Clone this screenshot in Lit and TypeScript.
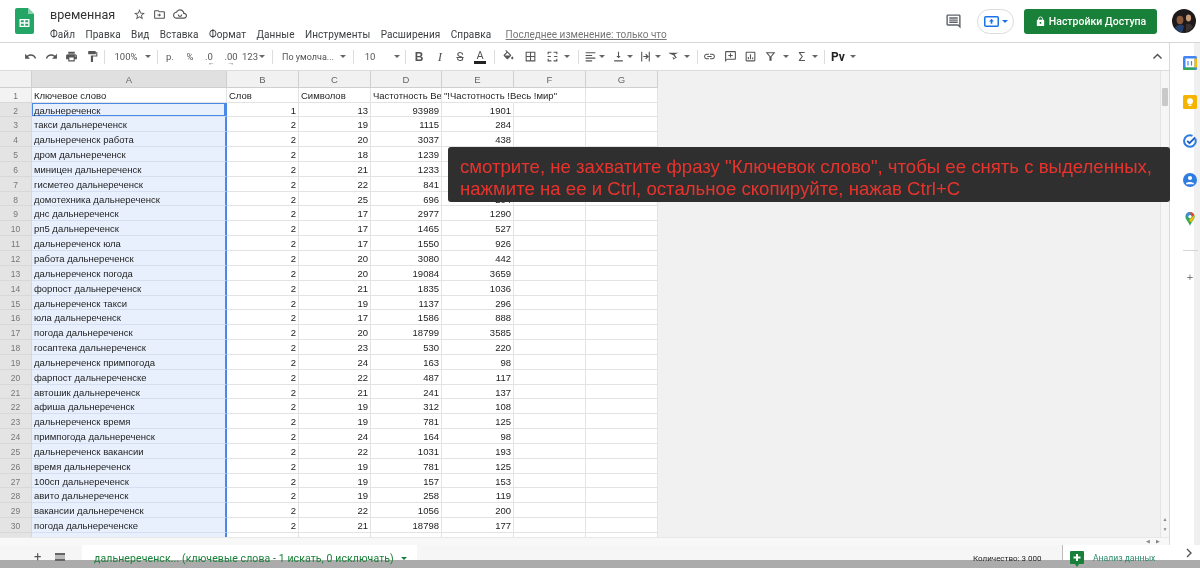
import {css, html, LitElement, svg} from 'lit';
import type {TemplateResult} from 'lit';
import {customElement} from 'lit/decorators.js';

type Row = [string, number, number, number, number];

const ROWS: Row[] = [
  ['дальнереченск', 1, 13, 93989, 1901],
  ['такси дальнереченск', 2, 19, 1115, 284],
  ['дальнереченск работа', 2, 20, 3037, 438],
  ['дром дальнереченск', 2, 18, 1239, 851],
  ['миницен дальнереченск', 2, 21, 1233, 506],
  ['гисметео дальнереченск', 2, 22, 841, 340],
  ['домотехника дальнереченск', 2, 25, 696, 204],
  ['днс дальнереченск', 2, 17, 2977, 1290],
  ['рп5 дальнереченск', 2, 17, 1465, 527],
  ['дальнереченск юла', 2, 17, 1550, 926],
  ['работа дальнереченск', 2, 20, 3080, 442],
  ['дальнереченск погода', 2, 20, 19084, 3659],
  ['форпост дальнереченск', 2, 21, 1835, 1036],
  ['дальнереченск такси', 2, 19, 1137, 296],
  ['юла дальнереченск', 2, 17, 1586, 888],
  ['погода дальнереченск', 2, 20, 18799, 3585],
  ['госаптека дальнереченск', 2, 23, 530, 220],
  ['дальнереченск примпогода', 2, 24, 163, 98],
  ['фарпост дальнереченске', 2, 22, 487, 117],
  ['автошик дальнереченск', 2, 21, 241, 137],
  ['афиша дальнереченск', 2, 19, 312, 108],
  ['дальнереченск время', 2, 19, 781, 125],
  ['примпогода дальнереченск', 2, 24, 164, 98],
  ['дальнереченск вакансии', 2, 22, 1031, 193],
  ['время дальнереченск', 2, 19, 781, 125],
  ['100сп дальнереченск', 2, 19, 157, 153],
  ['авито дальнереченск', 2, 19, 258, 119],
  ['вакансии дальнереченск', 2, 22, 1056, 200],
  ['погода дальнереченске', 2, 21, 18798, 177],
];

const COLS = ['A', 'B', 'C', 'D', 'E', 'F', 'G'];
const MENU = ['Файл', 'Правка', 'Вид', 'Вставка', 'Формат', 'Данные', 'Инструменты', 'Расширения', 'Справка'];

const icon = (d: string, size = 13, fill = '#555') =>
  html`<svg width=${size} height=${size} viewBox="0 0 24 24" fill=${fill}>${svg`<path d=${d}></path>`}</svg>`;

const UNDO = 'M12.5 8c-2.65 0-5.05.99-6.9 2.6L2 7v9h9l-3.62-3.62c1.39-1.16 3.16-1.88 5.12-1.88 3.54 0 6.55 2.31 7.6 5.5l2.37-.78C21.08 11.03 17.15 8 12.5 8z';
const REDO = 'M18.4 10.6C16.55 8.99 14.15 8 11.5 8c-4.65 0-8.58 3.03-9.96 7.22L3.9 16c1.05-3.19 4.05-5.5 7.6-5.5 1.95 0 3.73.72 5.12 1.88L13 16h9V7l-3.6 3.6z';
const PRINT = 'M19 8H5c-1.66 0-3 1.34-3 3v6h4v4h12v-4h4v-6c0-1.66-1.34-3-3-3zm-3 11H8v-5h8v5zm3-7c-.55 0-1-.45-1-1s.45-1 1-1 1 .45 1 1-.45 1-1 1zm-1-9H6v4h12V3z';
const PAINT = 'M18 4V3c0-.55-.45-1-1-1H5c-.55 0-1 .45-1 1v4c0 .55.45 1 1 1h12c.55 0 1-.45 1-1V6h1v4H9v11c0 .55.45 1 1 1h2c.55 0 1-.45 1-1v-9h8V4h-3z';
const FILL = 'M16.56 8.94L7.62 0 6.21 1.41l2.38 2.38-5.15 5.15c-.59.59-.59 1.54 0 2.12l5.5 5.5c.29.29.68.44 1.06.44s.77-.15 1.06-.44l5.5-5.5c.59-.58.59-1.53 0-2.12zM5.21 10L10 5.21 14.79 10H5.21zM19 11.5s-2 2.17-2 3.5c0 1.1.9 2 2 2s2-.9 2-2c0-1.33-2-3.5-2-3.5z';
const BORDERS = 'M3 3v18h18V3H3zm8 16H5v-6h6v6zm0-8H5V5h6v6zm8 8h-6v-6h6v6zm0-8h-6V5h6v6z';
const MERGE = 'M3 3h7v2H5v3H3V3zm11 0h7v5h-2V5h-5V3zM3 16h2v3h5v2H3v-5zm16 0h2v5h-7v-2h5v-3zM3 11h6v2H3zm12 0h6v2h-6z';
const HALIGN = 'M3 4h18v2H3zM3 9h12v2H3zM3 14h18v2H3zM3 19h12v2H3z';
const VALIGN = 'M16 11h-3V3h-2v8H8l4 4 4-4zM4 19v2h16v-2H4z';
const WRAP = 'M4 3h2v18H4zM18 3h2v18h-2zM8 11h6l-2.5-2.5L13 7l5 5-5 5-1.5-1.5L14 13H8z';
const ROTATE = 'M3 5h18l-7 3.5 4 6-1.8 1-4.2-6L5 7zM10 13l2 5 3-3z';
const LINK = 'M3.9 12c0-1.71 1.39-3.1 3.1-3.1h4V7H7c-2.76 0-5 2.24-5 5s2.24 5 5 5h4v-1.9H7c-1.71 0-3.1-1.39-3.1-3.1zM8 13h8v-2H8v2zm9-6h-4v1.9h4c1.71 0 3.1 1.39 3.1 3.1s-1.39 3.1-3.1 3.1h-4V17h4c2.76 0 5-2.24 5-5s-2.24-5-5-5z';
const NOTE = 'M20 2H4c-1.1 0-2 .9-2 2v18l4-4h14c1.1 0 2-.9 2-2V4c0-1.1-.9-2-2-2zm0 14H6l-2 2V4h16v12zM11 6h2v3h3v2h-3v3h-2v-3H8V9h3z';
const CHART = 'M19 3H5c-1.1 0-2 .9-2 2v14c0 1.1.9 2 2 2h14c1.1 0 2-.9 2-2V5c0-1.1-.9-2-2-2zm0 16H5V5h14v14zM7 13h2v4H7zm4-5h2v9h-2zm4 6h2v3h-2z';
const FILTER = 'M3 4h18l-7 8.5V20h-4v-7.5zM7.2 6l4.8 5.800 4.800-5.800z';
const STAR = 'M22 9.24l-7.19-.62L12 2 9.19 8.63 2 9.24l5.46 4.73L5.82 21 12 17.27 18.18 21l-1.63-7.03L22 9.24zM12 15.4l-3.76 2.27 1-4.28-3.32-2.88 4.38-.38L12 6.1l1.71 4.04 4.38.38-3.32 2.88 1 4.28L12 15.4z';
const FOLDER = 'M20 6h-8l-2-2H4c-1.1 0-2 .9-2 2v12c0 1.1.9 2 2 2h16c1.1 0 2-.9 2-2V8c0-1.1-.9-2-2-2zm0 12H4V6h5.2l2 2H20v10zM11 10v2H8v2h3v2l4-3z';
const CLOUD = 'M19.35 10.04C18.67 6.59 15.64 4 12 4 9.11 4 6.6 5.64 5.35 8.04 2.34 8.36 0 10.91 0 14c0 3.31 2.69 6 6 6h13c2.76 0 5-2.24 5-5 0-2.64-2.05-4.78-4.65-4.96zM19 18H6c-2.21 0-4-1.79-4-4 0-2.05 1.53-3.76 3.56-3.97l1.07-.11.5-.95C8.08 7.14 9.94 6 12 6c2.62 0 4.88 1.86 5.39 4.43l.3 1.5 1.53.11c1.56.1 2.78 1.41 2.78 2.96 0 1.65-1.35 3-3 3zM8 13a4 4 0 0 0 8 0h-2a2 2 0 0 1-4 0z';
const COMMENT = 'M22 4c0-1.1-.9-2-2-2H4c-1.1 0-2 .9-2 2v12c0 1.1.9 2 2 2h14l4 4V4zm-2 13.2L18.8 16H4V4h16v13.2zM6 12h12v2H6zm0-3h12v2H6zm0-3h12v2H6z';
const LOCK = 'M18 8h-1V6c0-2.76-2.24-5-5-5S7 3.24 7 6v2H6c-1.1 0-2 .9-2 2v10c0 1.1.9 2 2 2h12c1.1 0 2-.9 2-2V10c0-1.1-.9-2-2-2zm-6 9c-1.1 0-2-.9-2-2s.9-2 2-2 2 .9 2 2-.9 2-2 2zm3.1-9H8.9V6c0-1.71 1.39-3.1 3.1-3.1 1.71 0 3.1 1.39 3.1 3.1v2z';

const caret = html`<span class="caret"></span>`;
const txt = (s: string, cls = '') => html`<span class="tt ${cls}">${s}</span>`;

// [centre x of the item, its width, content]
const TOOLS: [number, number, TemplateResult | null][] = [
  [30, 16, icon(UNDO)],
  [51, 16, icon(REDO)],
  [71, 16, icon(PRINT)],
  [92, 16, icon(PAINT)],
  [104, 1, null],
  [126, 24, txt('100%')],
  [148, 8, caret],
  [157, 1, null],
  [170, 14, txt('р.')],
  [190, 14, txt('%')],
  [209, 16, html`<span class="tt dec">.0<i>←</i></span>`],
  [231, 18, html`<span class="tt dec">.00<i>→</i></span>`],
  [250, 18, txt('123')],
  [262, 8, caret],
  [272, 1, null],
  [308, 52, txt('По умолча...', 'narrow')],
  [343, 8, caret],
  [353, 1, null],
  [370, 14, txt('10')],
  [397, 8, caret],
  [405, 1, null],
  [419, 14, txt('B', 'b')],
  [440, 14, txt('I', 'i')],
  [460, 14, txt('S', 's')],
  [480, 16, html`<span class="tt a">A</span>`],
  [494, 1, null],
  [508, 15, icon(FILL)],
  [530, 15, icon(BORDERS)],
  [552, 15, icon(MERGE)],
  [567, 8, caret],
  [578, 1, null],
  [590, 15, icon(HALIGN)],
  [602, 8, caret],
  [618, 15, icon(VALIGN)],
  [630, 8, caret],
  [645, 15, icon(WRAP)],
  [658, 8, caret],
  [673, 15, icon(ROTATE)],
  [687, 8, caret],
  [697, 1, null],
  [709, 15, icon(LINK)],
  [730, 15, icon(NOTE)],
  [750, 15, icon(CHART)],
  [770, 15, icon(FILTER)],
  [786, 8, caret],
  [802, 12, txt('Σ', 'sum')],
  [815, 8, caret],
  [824, 1, null],
  [838, 18, txt('Pv', 'pv')],
  [853, 8, caret],
];

@customElement('app-root')
export class AppRoot extends LitElement {
  static styles = css`
    :host {
      display: block;
      width: 1200px;
      height: 568px;
      overflow: hidden;
      font-family: 'Liberation Sans', Arial, sans-serif;
      color: #222;
    }
    .app {
      position: relative;
      display: flex;
      flex-direction: column;
      width: 1200px;
      height: 568px;
      background: #fff;
      overflow: hidden;
      filter: blur(0.35px);
    }

    /* header */
    .head {
      flex: none;
      height: 43px;
      box-sizing: border-box;
      border-bottom: 1px solid #d6d6d6;
      display: flex;
      align-items: flex-start;
      padding-left: 15px;
    }
    .logo {
      margin-top: 8px;
      width: 19px;
      height: 26px;
    }
    .titles {
      margin-left: 16px;
      display: flex;
      flex-direction: column;
    }
    .title-row {
      display: flex;
      align-items: center;
      height: 20px;
      margin-top: 4px;
    }
    .title {
      font-family: Roboto, sans-serif;
      font-size: 12.6px;
      color: #333;
      width: 83px;
    }
    .title-row svg {
      margin-right: 7px;
    }
    .menu {
      display: flex;
      align-items: center;
      height: 17px;
      margin-top: 2px;
      font-family: Roboto, sans-serif;
      font-size: 10px;
      letter-spacing: 0.1px;
      color: #3c4043;
      gap: 10.3px;
    }
    .last {
      margin-left: 4px;
      letter-spacing: 0;
      color: #777;
      text-decoration: underline;
    }
    .head-right {
      margin-left: auto;
      display: flex;
      align-items: center;
      height: 42px;
      padding-right: 4px;
    }
    .present {
      margin-left: 15px;
      width: 37px;
      height: 25px;
      box-sizing: border-box;
      border: 1px solid #dadce0;
      border-radius: 13px;
      display: flex;
      align-items: center;
      justify-content: center;
      gap: 3px;
    }
    .present .caret {
      border-top-color: #1a73e8;
    }
    .share {
      margin-left: 10px;
      width: 133px;
      height: 25px;
      border-radius: 3px;
      background: #188038;
      color: #fff;
      font-family: Roboto, sans-serif;
      font-weight: 500;
      font-size: 10.5px;
      display: flex;
      align-items: center;
      justify-content: center;
      gap: 3px;
    }
    .avatar {
      margin-left: 15px;
      width: 24px;
      height: 24px;
    }

    /* toolbar */
    .mid {
      flex: none;
      height: 502px;
      display: flex;
    }
    .work {
      flex: 1;
      min-width: 0;
      display: flex;
      flex-direction: column;
      border-right: 1px solid #d9d9d9;
    }
    .toolbar {
      flex: none;
      height: 28px;
      box-sizing: border-box;
      border-bottom: 1px solid #dcdcdc;
      display: flex;
      align-items: center;
    }
    .tool {
      flex: none;
      display: flex;
      align-items: center;
      justify-content: center;
      white-space: nowrap;
    }
    .sep {
      height: 14px;
      background: #dadce0;
    }
    .caret {
      width: 0;
      height: 0;
      border-left: 3px solid transparent;
      border-right: 3px solid transparent;
      border-top: 3px solid #666;
    }
    .tt {
      font-family: Roboto, sans-serif;
      font-size: 9.5px;
      color: #555;
      position: relative;
    }
    .narrow {
      font-size: 9px;
    }
    .b {
      font-weight: 700;
      font-size: 12px;
      font-family: 'Liberation Sans', sans-serif;
    }
    .i {
      font-style: italic;
      font-size: 13px;
      font-family: 'Liberation Serif', serif;
    }
    .s {
      font-size: 12px;
      text-decoration: line-through;
    }
    .a {
      font-size: 11px;
      line-height: 11px;
      border-bottom: 3px solid #222;
      padding: 0 2px;
    }
    .sum {
      font-size: 12px;
    }
    .pv {
      font-weight: 700;
      font-size: 12px;
      color: #222;
    }
    .dec i {
      position: absolute;
      left: 3px;
      top: 8px;
      font-style: normal;
      font-size: 7px;
    }
    .collapse {
      margin-left: auto;
      margin-right: 6px;
    }

    /* grid */
    .area {
      flex: 1;
      min-height: 0;
      display: flex;
      background: #f1f1f1;
    }
    .sheet {
      flex: 1;
      min-width: 0;
      overflow: hidden;
    }
    .grid {
      display: grid;
      grid-template-columns: 32px 195px 72px 72px 71px 72px 72px 72px;
      grid-template-rows: 16.7px;
      grid-auto-rows: 14.857px;
      width: 658px;
      font-size: 9.5px;
      color: #1d1d1d;
      background: #fff;
    }
    .grid > div {
      box-sizing: border-box;
      border-right: 1px solid #e3e3e3;
      border-bottom: 1px solid #e3e3e3;
      overflow: hidden;
      white-space: nowrap;
      line-height: 14px;
      padding: 1px 2px 0;
    }
    .grid > .ch {
      background: #f1f1f1;
      border-color: #cfcfcf;
      text-align: center;
      color: #666;
      line-height: 16px;
    }
    .grid > .ch.on {
      background: #e0e0e0;
    }
    .grid > .rh {
      background: #f3f3f3;
      border-color: #d8d8d8;
      text-align: center;
      color: #777;
      font-size: 8.5px;
    }
    .grid > .rh.on {
      background: #e4e4e4;
    }
    .grid > .num {
      text-align: right;
    }
    .grid > .sel {
      background: #e8f0fd;
      border-right: 2px solid #4a89e8;
      border-bottom-color: #d5dff0;
    }
    .grid > .cur {
      box-shadow: inset 0 0 0 1px #4a89e8;
    }
    .grid > .spill {
      overflow: visible;
      border-right-color: transparent;
    }
    .vs {
      flex: none;
      width: 8px;
      background: #f6f6f6;
      border-left: 1px solid #e4e4e4;
      display: flex;
      flex-direction: column;
      align-items: center;
      padding: 17px 0 3px;
    }
    .vs i {
      width: 6px;
      height: 18px;
      background: #c9c9c9;
      border-radius: 1px;
    }
    .vs em {
      font-style: normal;
      font-size: 5px;
      line-height: 10px;
      color: #888;
      text-align: center;
    }
    .vs em:first-of-type {
      margin-top: auto;
    }
    .hs {
      flex: none;
      height: 8px;
      background: #f8f8f8;
      border-top: 1px solid #e8e8e8;
      box-sizing: border-box;
      display: flex;
      justify-content: flex-end;
      gap: 6px;
      padding-right: 9px;
      font-size: 5px;
      line-height: 7px;
      color: #888;
    }

    /* right icon rail */
    .side {
      flex: none;
      width: 30px;
      box-sizing: border-box;
      padding: 13px 0 0 10px;
      display: flex;
      flex-direction: column;
      align-items: center;
      background: linear-gradient(to right, #fff 24px, #f0f0f0 24px);
      gap: 25px;
    }
    .side svg {
      display: block;
      flex: none;
    }
    .rule {
      width: 15px;
      height: 1px;
      background: #d5d5d5;
      margin-top: -1px;
    }
    .plus {
      margin-top: -5px;
      color: #777;
      font-size: 11px;
      line-height: 12px;
    }

    /* sheet bar */
    .bar {
      position: relative;
      flex: none;
      height: 23px;
      background: #f6f6f6;
      display: flex;
      align-items: flex-start;
      font-family: Roboto, sans-serif;
    }
    .band {
      position: absolute;
      left: 0;
      right: 0;
      top: 15px;
      bottom: 0;
      background: #ababab;
    }
    .bar-btns {
      position: relative;
      width: 82px;
      display: flex;
      gap: 14px;
      padding: 5px 0 0 34px;
      box-sizing: border-box;
      color: #555;
      font-size: 13px;
      line-height: 13px;
    }
    .list {
      width: 10px;
      height: 8px;
      margin-top: 3px;
      border-top: 2px solid #666;
      border-bottom: 2px solid #666;
      box-sizing: border-box;
      background: #bbb;
    }
    .tab {
      width: 335px;
      height: 15px;
      background: #fff;
      box-sizing: border-box;
      padding: 7px 0 0 12px;
      display: flex;
      gap: 7px;
      color: #188038;
      font-size: 10.5px;
      letter-spacing: 0.1px;
      line-height: 13px;
      white-space: nowrap;
      position: relative;
    }
    .tab .caret {
      border-top-color: #188038;
      margin-top: 5px;
    }
    .count {
      position: absolute;
      left: 973px;
      top: 7px;
      font-size: 8px;
      line-height: 13px;
      color: #222;
    }
    .explore {
      position: absolute;
      left: 1062px;
      top: 0;
      width: 138px;
      height: 15px;
      background: #fff;
      border-left: 1px solid #bbb;
      box-sizing: border-box;
    }
    .explore-i {
      position: absolute;
      left: 1070px;
      top: 6px;
    }
    .explore-t {
      position: absolute;
      left: 1093px;
      top: 7px;
      font-size: 8.6px;
      line-height: 13px;
      color: #2a8a6a;
    }
    .chev {
      position: absolute;
      left: 1185px;
      top: 3px;
    }

    /* dark note over the sheet */
    .note {
      position: absolute;
      left: 448px;
      top: 147px;
      width: 722px;
      height: 55px;
      box-sizing: border-box;
      padding: 9px 0 0 12px;
      background: #2f2f2f;
      border-radius: 3px;
      color: #e8332d;
      font-size: 18.6px;
      line-height: 22px;
      white-space: nowrap;
    }
  `;

  private renderTools() {
    let end = 0;
    return TOOLS.map(([c, w, content]) => {
      const gap = c - w / 2 - end;
      end = c + w / 2;
      return html`<span
        class="tool ${content ? '' : 'sep'}"
        style="width:${w}px;margin-left:${gap}px"
        >${content}</span
      >`;
    });
  }

  private renderGrid() {
    // row 31 is only a sliver above the scrollbar, so it shows no number
    const row = (n: number, r: (string | number)[]) => html`
      <div class="rh ${n > 1 ? 'on' : ''}">${n < 31 ? n : ''}</div>
      <div class="${n > 1 ? 'sel' : ''} ${n === 2 ? 'cur' : ''}">${r[0] ?? ''}</div>
      ${[1, 2, 3, 4, 5, 6].map(i => html`<div class=${i < 5 ? 'num' : ''}>${r[i] ?? ''}</div>`)}
    `;
    return html`<div class="grid">
      <div class="ch"></div>
      ${COLS.map((c, i) => html`<div class="ch ${i === 0 ? 'on' : ''}">${c}</div>`)}
      <div class="rh">1</div>
      <div>Ключевое слово</div>
      <div>Слов</div>
      <div>Символов</div>
      <div>Частотность Ве</div>
      <div class="spill">"!Частотность !Весь !мир"</div>
      <div></div>
      <div></div>
      ${ROWS.map((r, i) => row(i + 2, r))} ${row(31, [''])}
    </div>`;
  }

  render() {
    return html`<div class="app">
      <header class="head">
        <svg class="logo" viewBox="0 0 19 26">
          <path d="M2 0h11l6 6v18a2 2 0 0 1-2 2H2a2 2 0 0 1-2-2V2a2 2 0 0 1 2-2z" fill="#23a566"></path>
          <path d="M13 0l6 6h-6z" fill="#8ed1b1"></path>
          <path d="M4.5 11h10v8h-10zm1.3 1.3v2h3v-2zm4.4 0v2h3v-2zm-4.4 3.4v2h3v-2zm4.4 0v2h3v-2z" fill="#fff" fill-rule="evenodd"></path>
        </svg>
        <div class="titles">
          <div class="title-row">
            <span class="title">временная</span>
            ${icon(STAR, 13)} ${icon(FOLDER, 13)} ${icon(CLOUD, 14)}
          </div>
          <nav class="menu">
            ${MENU.map(m => html`<span>${m}</span>`)}
            <span class="last">Последнее изменение: только что</span>
          </nav>
        </div>
        <div class="head-right">
          ${icon(COMMENT, 17, '#5f6368')}
          <div class="present">
            <svg width="15" height="11" viewBox="0 0 15 11">
              <rect x=".75" y=".75" width="13.500" height="9.500" rx="1" fill="#fff" stroke="#1a73e8" stroke-width="1.500"></rect>
              <path d="M7.500 2.800l2.400 2.600H8.300v2.400H6.700V5.400H5.100z" fill="#1a73e8"></path>
            </svg>
            <span class="caret"></span>
          </div>
          <div class="share">${icon(LOCK, 11, '#fff')}<span>Настройки Доступа</span></div>
          <svg class="avatar" viewBox="0 0 24 24">
            <circle cx="12" cy="12" r="12" fill="#1e1a1c"></circle>
            <ellipse cx="8" cy="11" rx="3.4" ry="4.2" fill="#8a5a3c"></ellipse>
            <ellipse cx="16.5" cy="9" rx="2.6" ry="3.4" fill="#c89a76"></ellipse>
            <path d="M3 19c2-4 7-4 9-2l-2 7a12 12 0 0 1-7-5z" fill="#24406e"></path>
            <path d="M14 15c3-1 6 0 7 3a12 12 0 0 1-7 5z" fill="#3a3230"></path>
          </svg>
        </div>
      </header>

      <div class="mid">
        <div class="work">
          <div class="toolbar">
            ${this.renderTools()}
            <svg class="collapse" width="11" height="7" viewBox="0 0 11 7">
              <path d="M1.5 5.5l4-4 4 4" fill="none" stroke="#555" stroke-width="1.5"></path>
            </svg>
          </div>
          <div class="area">
            <div class="sheet">${this.renderGrid()}</div>
            <div class="vs"><i></i><em>▲</em><em>▼</em></div>
          </div>
          <div class="hs"><span>◀</span><span>▶</span></div>
        </div>
        <aside class="side">
          <svg width="14" height="14" viewBox="0 0 14 14">
            <rect width="14" height="14" rx="1.5" fill="#4285f4"></rect>
            <rect x="2.5" y="2.5" width="9" height="9" fill="#fff"></rect>
            <path d="M11.5 2.5H14v9h-2.5z" fill="#fbbc04"></path>
            <path d="M0 11.5h11.5V14H1.5A1.5 1.5 0 0 1 0 12.5z" fill="#34a853"></path>
            <path d="M5 5v4.5M8.5 5v4.5" stroke="#4285f4" stroke-width="1.2"></path>
          </svg>
          <svg width="14" height="14" viewBox="0 0 14 14">
            <rect width="14" height="14" rx="1.5" fill="#f4b400"></rect>
            <circle cx="7" cy="6.2" r="3" fill="#fff"></circle>
            <rect x="5.6" y="9.6" width="2.8" height="1.4" fill="#fff"></rect>
          </svg>
          <svg width="14" height="14" viewBox="0 0 14 14">
            <path d="M12.2 4.6A5.8 5.8 0 1 1 9.5 1.8" fill="none" stroke="#2f7de1" stroke-width="2"></path>
            <path d="M4.2 6.8l2.3 2.3 5.7-5.7" fill="none" stroke="#1a5fc8" stroke-width="1.9"></path>
          </svg>
          <svg width="14" height="14" viewBox="0 0 14 14">
            <circle cx="7" cy="7" r="7" fill="#2f7de1"></circle>
            <circle cx="7" cy="5" r="2.1" fill="#fff"></circle>
            <path d="M3 10.4c.6-2 6.4-2 8 0v.8H3z" fill="#fff"></path>
          </svg>
          <svg width="14" height="14" viewBox="0 0 14 14">
            <path d="M7 0a4.6 4.6 0 0 1 4.6 4.6c0 3.2-3.2 5.2-4.6 9.4C5.6 9.8 2.4 7.800 2.400 4.600A4.600 4.600 0 0 1 7 0z" fill="#34a853"></path>
            <path d="M3.200 2.200A4.600 4.600 0 0 1 7 0l.8 3-3.600 4z" fill="#4285f4"></path>
            <path d="M7 0a4.600 4.600 0 0 1 4.200 2.600L8.800 5z" fill="#ea4335"></path>
            <path d="M11.300 3.200c.6 2.800-1.800 4.800-3.300 7.400L6 8z" fill="#fbbc04"></path>
            <circle cx="7" cy="4.600" r="1.600" fill="#fff"></circle>
          </svg>
          <div class="rule"></div>
          <div class="plus">+</div>
        </aside>
      </div>

      <footer class="bar">
        <div class="band"></div>
        <div class="bar-btns"><span>+</span><span class="list"></span></div>
        <div class="tab">
          <span>дальнереченск... (ключевые слова - 1 искать, 0 исключать)</span>
          <span class="caret"></span>
        </div>
        <span class="count">Количество: 3 000</span>
        <div class="explore"></div>
        <svg class="explore-i" width="14" height="16" viewBox="0 0 14 16">
          <path d="M1 0h12a1 1 0 0 1 1 1v11a1 1 0 0 1-1 1H9l-2 3-2-3H1a1 1 0 0 1-1-1V1a1 1 0 0 1 1-1z" fill="#188038"></path>
          <path d="M6 3h2v2.500h2.500v2H8V10H6V7.500H3.500v-2H6z" fill="#fff"></path>
        </svg>
        <span class="explore-t">Анализ данных</span>
        <svg class="chev" width="8" height="10" viewBox="0 0 8 10">
          <path d="M2 1l4 4-4 4" fill="none" stroke="#555" stroke-width="1.400"></path>
        </svg>
      </footer>

      <div class="note">
        смотрите, не захватите фразу "Ключевок слово", чтобы ее снять с выделенных,<br />
        нажмите на ее и Ctrl, остальное скопируйте, нажав Ctrl+C
      </div>
    </div>`;
  }
}

declare global {
  interface HTMLElementTagNameMap {
    'app-root': AppRoot;
  }
}
